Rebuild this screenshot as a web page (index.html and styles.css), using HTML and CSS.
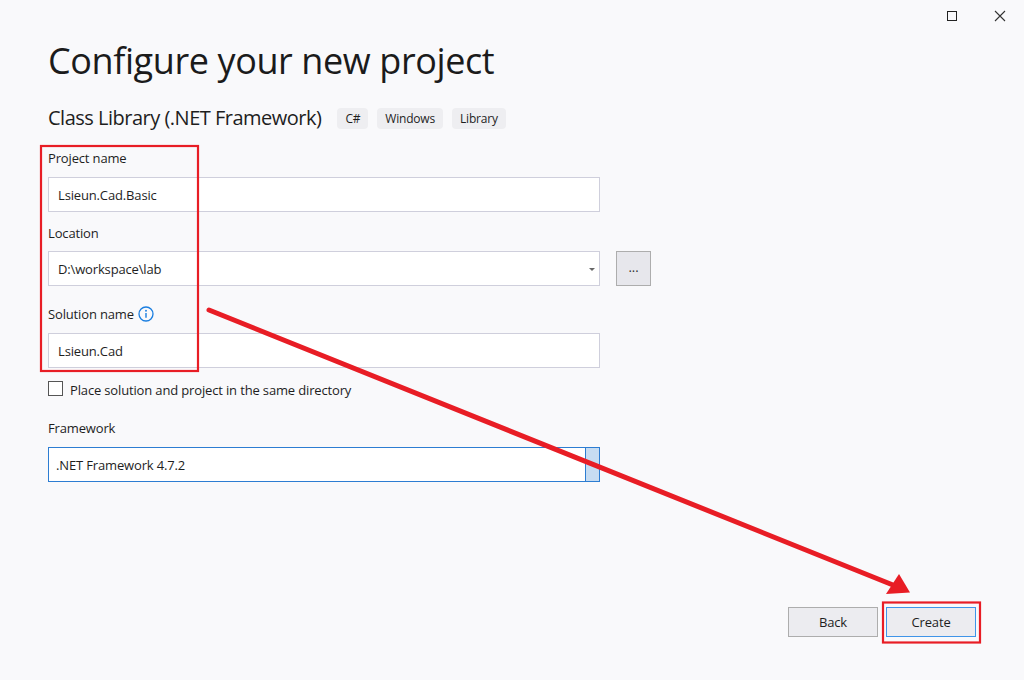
FILE: index.html
```html
<!DOCTYPE html>
<html lang="en">
<head>
<meta charset="utf-8">
<title>Configure your new project</title>
<link rel="stylesheet" href="styles.css">
</head>
<body>
<div class="window">
  <div class="titlebar">
    <span class="winbtn max" aria-label="Maximize"><span class="sq"></span></span>
    <span class="winbtn close" aria-label="Close">
      <svg width="12" height="12" viewBox="0 0 12 12"><path d="M1 1 L11 11 M11 1 L1 11" stroke="#333" stroke-width="1.1" fill="none"/></svg>
    </span>
  </div>

  <main class="content">
    <h1 class="title">Configure your new project</h1>
    <div class="subtitle-row">
      <span class="subtitle">Class Library (.NET Framework)</span>
      <span class="tag">C#</span>
      <span class="tag">Windows</span>
      <span class="tag">Library</span>
    </div>

    <div class="field f-project">
      <label class="label">Project name</label>
      <div class="input">Lsieun.Cad.Basic</div>
    </div>

    <div class="field f-location">
      <label class="label">Location</label>
      <div class="row">
        <div class="input combo">D:\workspace\lab<span class="caret"></span></div>
        <button class="browse"><span class="dots">...</span></button>
      </div>
    </div>

    <div class="field f-solution">
      <label class="label">Solution name
        <svg class="info" width="16" height="16" viewBox="0 0 16 16"><circle cx="8" cy="8" r="7" fill="none" stroke="#1a7ee0" stroke-width="1.3"/><circle cx="8" cy="4.8" r="0.95" fill="#1a7ee0"/><path d="M8 7 V11.8" stroke="#1a7ee0" stroke-width="1.4"/></svg>
      </label>
      <div class="input">Lsieun.Cad</div>
    </div>

    <div class="check-row">
      <span class="checkbox"></span>
      <span class="check-text">Place solution and project in the same directory</span>
    </div>

    <div class="field f-framework">
      <label class="label">Framework</label>
      <div class="select">
        <span class="select-text">.NET Framework 4.7.2</span>
        <span class="select-btn"></span>
      </div>
    </div>
  </main>

  <footer class="footer">
    <button class="btn">Back</button>
    <button class="btn primary">Create</button>
  </footer>

  <svg class="annot" width="1024" height="680" viewBox="0 0 1024 680">
    <rect x="41" y="146" width="157" height="225" fill="none" stroke="#e81d25" stroke-width="2.2"/>
    <rect x="883" y="602.5" width="97" height="40" fill="none" stroke="#e81d25" stroke-width="2.2"/>
    <line x1="209" y1="310" x2="893" y2="585" stroke="#e81d25" stroke-width="5" stroke-linecap="round"/>
    <polygon points="910,592.5 886,594 899,574" fill="#e81d25"/>
  </svg>
</div>
</body>
</html>
```

FILE: styles.css
```css
* { box-sizing: border-box; }

html, body {
  margin: 0;
  padding: 0;
}

body {
  background: #f9f9fb;
  font-family: "Open Sans", "Noto Sans", "Liberation Sans", sans-serif;
  font-size: 13px;
  letter-spacing: -0.15px;
  color: #1e1e1e;
}

.window {
  position: relative;
  width: 1024px;
  height: 680px;
  display: flex;
  flex-direction: column;
  overflow: hidden;
}

.titlebar {
  height: 32px;
  display: flex;
  justify-content: flex-end;
  align-items: center;
}

.winbtn {
  width: 48px;
  height: 32px;
  display: flex;
  align-items: center;
  justify-content: center;
}

.winbtn .sq {
  width: 10px;
  height: 10px;
  border: 1px solid #222;
}

.content {
  padding-left: 48px;
  width: 600px;
}

.title {
  margin: 5px 0 0;
  font-size: 36px;
  font-weight: 400;
  line-height: 48px;
  letter-spacing: -0.4px;
  color: #1b1b1b;
}

.subtitle-row {
  margin-top: 19px;
  display: flex;
  align-items: center;
  height: 28px;
}

.subtitle {
  font-size: 20px;
  line-height: 28px;
  letter-spacing: -0.5px;
  margin-right: 16px;
}

.tag {
  height: 21px;
  line-height: 21px;
  padding: 0 8px;
  background: #eeeef1;
  border-radius: 4px;
  font-size: 12px;
  letter-spacing: -0.2px;
  margin-right: 9px;
}

.field {
  display: flex;
  flex-direction: column;
}

.label {
  display: flex;
  align-items: center;
  line-height: 18px;
  height: 18px;
  font-size: 13px;
}

.info { margin-left: 4px; }

.f-project { margin-top: 17px; }
.f-location { margin-top: 12px; }
.f-solution { margin-top: 19px; }
.f-framework { margin-top: 23px; }

.input {
  margin-top: 10px;
  height: 35px;
  width: 552px;
  flex-shrink: 0;
  background: #fff;
  border: 1px solid #cfcfdc;
  padding: 0 9px;
  display: flex;
  align-items: center;
  font-size: 13px;
}

.row {
  display: flex;
  gap: 16px;
  margin-top: 9px;
}

.row .input { margin-top: 0; }

.combo { position: relative; }

.caret {
  position: absolute;
  right: 4px;
  top: 16px;
  width: 0;
  height: 0;
  border-left: 3.5px solid transparent;
  border-right: 3.5px solid transparent;
  border-top: 3.5px solid #666;
}

.browse {
  width: 35px;
  height: 35px;
  flex-shrink: 0;
  background: #e7e7ec;
  border: 1px solid #adadad;
  padding: 0;
  display: flex;
  align-items: center;
  justify-content: center;
  font-family: inherit;
  font-size: 13px;
  color: #333;
}

.dots { line-height: 1; margin-top: -2px; }

.check-row {
  margin-top: 13px;
  display: flex;
  align-items: center;
  gap: 7px;
  height: 15px;
  line-height: 15px;
}

.check-text { padding-top: 4px; }

.checkbox {
  width: 15px;
  height: 15px;
  border: 1px solid #555;
  background: #fff;
}

.select {
  margin-top: 10px;
  width: 552px;
  height: 35px;
  display: flex;
  border: 1px solid #2d7dd2;
  background: #fff;
}

.select-text {
  flex: 1;
  display: flex;
  align-items: center;
  padding-left: 7px;
}

.select-btn {
  width: 14px;
  background: #c6dcf2;
  border-left: 1px solid #2d7dd2;
}

.footer {
  margin-top: auto;
  display: flex;
  justify-content: flex-end;
  gap: 8px;
  padding: 0 48px 43px 0;
}

.btn {
  width: 90px;
  height: 30px;
  background: #ececf0;
  border: 1px solid #adadad;
  font-family: inherit;
  font-size: 13px;
  letter-spacing: -0.15px;
  color: #1e1e1e;
  padding: 0;
}

.btn.primary { border-color: #3f94e8; }

.annot {
  position: absolute;
  left: 0;
  top: 0;
  pointer-events: none;
}
```
